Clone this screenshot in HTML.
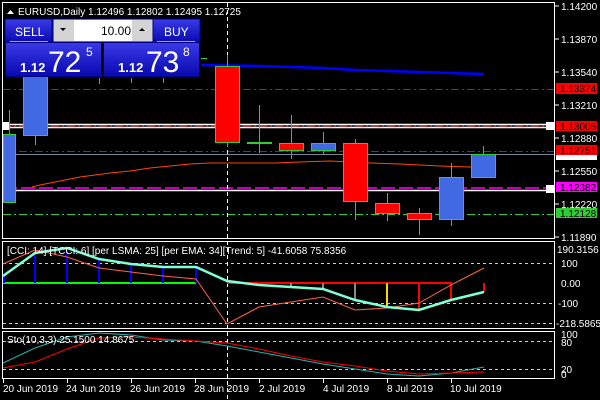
<!DOCTYPE html>
<html><head><meta charset="utf-8"><style>
html,body{margin:0;padding:0;background:#000;width:600px;height:400px;overflow:hidden}
svg{display:block}
text{font-family:"Liberation Sans",sans-serif;font-size:10px;fill:#fff}
.lb{fill:#000;font-size:10px}
</style></head><body>
<svg width="600" height="400" viewBox="0 0 600 400">
<rect width="600" height="400" fill="#000"/>
<!-- borders -->
<rect x="2.5" y="2.5" width="552" height="236" fill="none" stroke="#fff"/>
<rect x="2.5" y="241.5" width="552" height="87" fill="none" stroke="#fff"/>
<rect x="2.5" y="331.5" width="552" height="47" fill="none" stroke="#fff"/>
<!-- price axis ticks/labels -->
<g stroke="#fff">
<line x1="555" y1="6" x2="559" y2="6"/><line x1="555" y1="39" x2="559" y2="39"/><line x1="555" y1="72" x2="559" y2="72"/><line x1="555" y1="105" x2="559" y2="105"/><line x1="555" y1="138" x2="559" y2="138"/><line x1="555" y1="171" x2="559" y2="171"/><line x1="555" y1="204" x2="559" y2="204"/><line x1="555" y1="237" x2="559" y2="237"/>
</g>
<text x="561" y="10">1.14200</text><text x="561" y="43">1.13870</text><text x="561" y="76">1.13540</text><text x="561" y="109">1.13210</text><text x="561" y="142">1.12880</text><text x="561" y="175">1.12550</text><text x="561" y="208">1.12220</text><text x="561" y="241">1.11890</text>
<!-- horizontal lines -->
<line x1="3" y1="89.5" x2="554" y2="89.5" stroke="#e00" stroke-dasharray="8,3,2,3"/>
<line x1="3" y1="124.5" x2="554" y2="124.5" stroke="#fff" stroke-width="1.5"/>
<line x1="3" y1="127.5" x2="554" y2="127.5" stroke="#fff" stroke-width="1.5"/>
<line x1="3" y1="126" x2="554" y2="126" stroke="#f00" stroke-dasharray="8,3,2,3"/>
<line x1="3" y1="151.5" x2="554" y2="151.5" stroke="#e00" stroke-dasharray="8,3,2,3"/>
<line x1="3" y1="154.5" x2="554" y2="154.5" stroke="#778899"/>
<line x1="3" y1="188" x2="554" y2="188" stroke="#f0f" stroke-width="1.5" stroke-dasharray="14,4"/>
<line x1="3" y1="190.5" x2="554" y2="190.5" stroke="#fff" stroke-width="1.5"/>
<line x1="3" y1="214.5" x2="554" y2="214.5" stroke="#32cd32" stroke-dasharray="8,3,2,3"/>
<!-- EMA orange -->
<polyline fill="none" stroke="#ff4500" points="32,187 40,185 50,183 60,181 70,179 80,177 95,175 110,173 130,171 150,168 170,166 190,164 210,163 275,163 300,162 330,161 370,163 400,164 420,165 440,166 470,167 480,166 495,165"/>
<!-- blue MA -->
<polyline fill="none" stroke="#00f" stroke-width="2.5" points="201,65 259,66 291,67 323,68 355,70 387,71 419,72 451,73 484,74"/>
<!-- vertical dashed -->
<line x1="227.5" y1="3" x2="227.5" y2="400" stroke="#fff" stroke-dasharray="4,3"/>
<!-- candles -->
<g stroke="#32cd32" stroke-width="1">
<line x1="9.5" y1="110" x2="9.5" y2="134"/>
<rect x="3.5" y="134.5" width="12" height="68" fill="#4169e1"/>
<line x1="35.5" y1="135" x2="35.5" y2="145"/>
<rect x="23.5" y="76.5" width="24" height="59" fill="#4169e1"/>
<line x1="99.5" y1="78" x2="99.5" y2="84"/><line x1="131.5" y1="78" x2="131.5" y2="83"/><line x1="163.5" y1="78" x2="163.5" y2="83"/>
<line x1="201" y1="58.5" x2="207" y2="58.5"/>
<line x1="227.5" y1="55" x2="227.5" y2="147"/>
<rect x="215.5" y="66.5" width="24" height="76" fill="#f00"/>
<line x1="259.5" y1="105" x2="259.5" y2="153"/>
<line x1="247" y1="143" x2="272" y2="143" stroke-width="2"/>
<line x1="291.5" y1="115" x2="291.5" y2="159"/>
<rect x="279.5" y="143.5" width="24" height="7" fill="#f00"/>
<line x1="323.5" y1="132" x2="323.5" y2="154"/>
<rect x="311.5" y="143.5" width="24" height="7" fill="#4169e1"/>
<line x1="355.5" y1="139" x2="355.5" y2="220"/>
<rect x="343.5" y="143.5" width="24" height="58" fill="#f00"/>
<line x1="387.5" y1="193" x2="387.5" y2="221"/>
<rect x="375.5" y="203.5" width="24" height="10" fill="#f00"/>
<line x1="419.5" y1="208" x2="419.5" y2="235"/>
<rect x="407.5" y="213.5" width="24" height="6" fill="#f00"/>
<line x1="451.5" y1="163" x2="451.5" y2="226"/>
<rect x="439.5" y="177.5" width="24" height="42" fill="#4169e1"/>
<line x1="483.5" y1="146" x2="483.5" y2="154"/>
<rect x="471.5" y="154.5" width="24" height="23" fill="#4169e1"/>
</g>
<!-- small white markers left -->
<rect x="2" y="122" width="7" height="8" fill="#fff"/>
<rect x="546" y="122" width="9" height="8" fill="#fff"/>
<rect x="546" y="185" width="9" height="8" fill="#fff"/>
<!-- right labels -->
<rect x="556" y="153" width="41" height="7" fill="#fff"/>
<rect x="556" y="83" width="41" height="11" fill="#f00"/><text class="lb" x="560" y="92">1.13374</text>
<rect x="556" y="121" width="41" height="10" fill="#f00"/><text class="lb" x="560" y="130">1.13005</text>
<rect x="556" y="145" width="41" height="10" fill="#f00"/><text class="lb" x="560" y="154">1.12751</text>
<rect x="556" y="182" width="41" height="10" fill="#f0f"/><text class="lb" x="560" y="191">1.12382</text>
<rect x="556" y="208" width="41" height="10" fill="#32cd32"/><text class="lb" x="560" y="217">1.12128</text>
<!-- title -->
<polygon points="7,14 14,14 10.5,10" fill="#fff"/>
<text x="18" y="15">EURUSD,Daily  1.12496 1.12802 1.12495 1.12725</text>
<!-- trade panel -->
<defs><linearGradient id="g" x1="0" y1="0" x2="0" y2="1"><stop offset="0" stop-color="#3a3ae8"/><stop offset="1" stop-color="#0808b0"/></linearGradient></defs>
<rect x="5" y="19" width="47" height="24" fill="url(#g)" stroke="#000080"/>
<line x1="10" y1="41.5" x2="48" y2="41.5" stroke="#9aa0ff"/>
<text x="15" y="36" style="font-size:12px">SELL</text>
<rect x="53" y="19" width="100" height="23" fill="#d4d4d4" stroke="#000080"/>
<rect x="74" y="20" width="58" height="21" fill="#fff"/>
<polygon points="60,28 66,28 63,31" fill="#000"/>
<polygon points="139,31 145,31 142,28" fill="#000"/>
<text x="101" y="35" style="font-size:12px;fill:#000">10.00</text>
<rect x="153" y="19" width="47" height="24" fill="url(#g)" stroke="#000080"/>
<line x1="157" y1="41.5" x2="195" y2="41.5" stroke="#9aa0ff"/>
<text x="164" y="36" style="font-size:12px">BUY</text>
<rect x="5.5" y="42.5" width="96" height="34" fill="url(#g)" stroke="#000080"/>
<rect x="103.5" y="42.5" width="96" height="34" fill="url(#g)" stroke="#000080"/>
<text x="20" y="72" style="font-size:13px;font-weight:bold">1.12</text>
<text x="48" y="72" style="font-size:30px">72</text>
<text x="86" y="56" style="font-size:12px">5</text>
<text x="118" y="72" style="font-size:13px;font-weight:bold">1.12</text>
<text x="146" y="72" style="font-size:30px">73</text>
<text x="183" y="56" style="font-size:12px">8</text>
<!-- CCI panel -->
<line x1="3" y1="263.5" x2="554" y2="263.5" stroke="#fff" stroke-dasharray="3,3" stroke-opacity=".8"/>
<line x1="3" y1="303.5" x2="554" y2="303.5" stroke="#fff" stroke-dasharray="3,3" stroke-opacity=".8"/>
<line x1="3" y1="323.5" x2="554" y2="323.5" stroke="#fff" stroke-dasharray="3,3" stroke-opacity=".8"/>
<line x1="3" y1="283" x2="196" y2="283" stroke="#0f0" stroke-width="2"/>
<g stroke="#00f" stroke-width="2">
<line x1="4" y1="283" x2="4" y2="276"/><line x1="35" y1="283" x2="35" y2="253"/><line x1="67" y1="283" x2="67" y2="248"/><line x1="99" y1="283" x2="99" y2="259"/><line x1="131" y1="283" x2="131" y2="264"/><line x1="163" y1="283" x2="163" y2="267"/><line x1="196" y1="283" x2="196" y2="267"/>
</g>
<line x1="227" y1="283" x2="452" y2="283" stroke="#f00" stroke-width="2"/>
<g stroke-width="2">
<line x1="291" y1="283" x2="291" y2="288" stroke="#888"/><line x1="323" y1="283" x2="323" y2="289" stroke="#888"/><line x1="355" y1="283" x2="355" y2="300" stroke="#888"/>
<line x1="387" y1="283" x2="387" y2="307" stroke="#ffd700"/><line x1="419" y1="283" x2="419" y2="310" stroke="#f00"/><line x1="451" y1="283" x2="451" y2="300" stroke="#f00"/><line x1="484" y1="283" x2="484" y2="292" stroke="#f00"/>
</g>
<polyline fill="none" stroke="#ff6347" points="3,264 35,250 67,257 99,268 131,272 163,276 196,279 227,324 259,307 291,302 323,297 355,310 387,308 419,303 451,285 484,268"/>
<polyline fill="none" stroke="#7fffd4" stroke-width="2.5" points="3,276 35,253 67,248 99,259 131,264 163,267 196,267 227,281 259,285 291,287 323,289 355,300 387,307 419,310 451,300 484,292"/>
<text x="7" y="254">[CCI: 14] [TCCI: 6] [per LSMA: 25] [per EMA: 34][Trend: 5]  -41.6058 75.8356</text>
<text x="557" y="253">190.3156</text>
<text x="561" y="267">100</text>
<text x="561" y="287">0.00</text>
<text x="558" y="307">-100</text>
<text x="556" y="327">-218.5865</text>
<!-- Sto panel -->
<line x1="3" y1="341.5" x2="554" y2="341.5" stroke="#fff" stroke-dasharray="3,3" stroke-opacity=".8"/>
<line x1="3" y1="369.5" x2="554" y2="369.5" stroke="#fff" stroke-dasharray="3,3" stroke-opacity=".8"/>
<polyline fill="none" stroke="#20b2aa" points="3,363 35,348 67,337 99,333 131,335 163,340 196,341 227,346 259,352 291,358 323,364 355,369 387,374 419,376 451,373 484,367"/>
<polyline fill="none" stroke="#f00" points="3,368 35,362 67,349 99,338 131,337 163,339 196,341 227,343 259,349 291,356 323,362 355,366 387,371 419,374 451,373 484,372"/>
<text x="7" y="343">Sto(10,3,3) 25.1500 14.8675</text>
<text x="561" y="338">100</text><text x="561" y="346">80</text>
<text x="561" y="373">20</text><text x="561" y="378">0</text>
<!-- date axis -->
<g stroke="#fff">
<line x1="3.5" y1="379" x2="3.5" y2="383"/><line x1="67.5" y1="379" x2="67.5" y2="383"/><line x1="131.5" y1="379" x2="131.5" y2="383"/><line x1="195.5" y1="379" x2="195.5" y2="383"/><line x1="259.5" y1="379" x2="259.5" y2="383"/><line x1="323.5" y1="379" x2="323.5" y2="383"/><line x1="387.5" y1="379" x2="387.5" y2="383"/><line x1="451.5" y1="379" x2="451.5" y2="383"/>
</g>
<text x="3" y="392">20 Jun 2019</text><text x="66" y="392">24 Jun 2019</text><text x="130" y="392">26 Jun 2019</text><text x="194" y="392">28 Jun 2019</text><text x="259" y="392">2 Jul 2019</text><text x="323" y="392">4 Jul 2019</text><text x="387" y="392">8 Jul 2019</text><text x="450" y="392">10 Jul 2019</text>
</svg>
</body></html>
